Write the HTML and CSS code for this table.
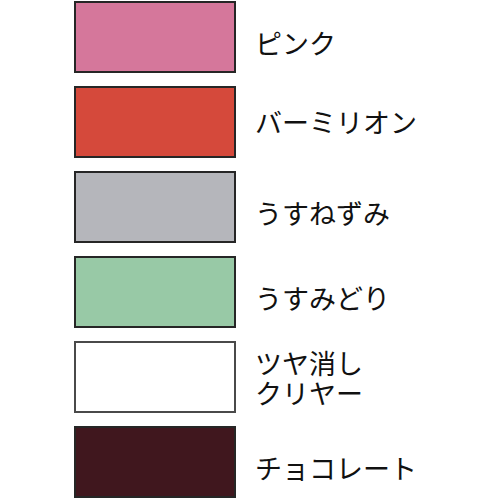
FILE: index.html
```html
<!DOCTYPE html>
<html lang="ja">
<head>
<meta charset="utf-8">
<link rel="stylesheet" href="styles.css">
</head>
<body>
<div class="list">
  <div class="row"><div class="swatch pink"></div><div class="label low">ピンク</div></div>
  <div class="row"><div class="swatch vermilion"></div><div class="label">バーミリオン</div></div>
  <div class="row"><div class="swatch gray"></div><div class="label low">うすねずみ</div></div>
  <div class="row"><div class="swatch green"></div><div class="label low">うすみどり</div></div>
  <div class="row"><div class="swatch white"></div><div class="label two">ツヤ消し<br>クリヤー</div></div>
  <div class="row"><div class="swatch choco"></div><div class="label low">チョコレート</div></div>
</div>
</body>
</html>
```

FILE: styles.css
```css
html, body {
  margin: 0;
  padding: 0;
  background: #ffffff;
}
.list {
  display: flex;
  flex-direction: column;
  gap: 13px;
  padding: 1px 0 0 74px;
}
.row {
  display: flex;
  align-items: center;
  height: 72px;
}
.swatch {
  box-sizing: border-box;
  width: 162px;
  height: 72px;
  border: 2px solid #262626;
  flex: none;
}
.pink { background: #d5779b; }
.vermilion { background: #d5493b; }
.gray { background: #b5b6bb; }
.green { background: #98c9a6; }
.white { background: #ffffff; border-color: #4a4a4a; }
.choco { background: #40171e; }
.label {
  margin-left: 19px;
  font-family: "Noto Sans CJK JP", "Noto Sans", sans-serif;
  font-size: 27px;
  line-height: 30px;
  color: #111;
}
.low {
  padding-top: 12px;
}
.two {
  padding-top: 2px;
}
```
